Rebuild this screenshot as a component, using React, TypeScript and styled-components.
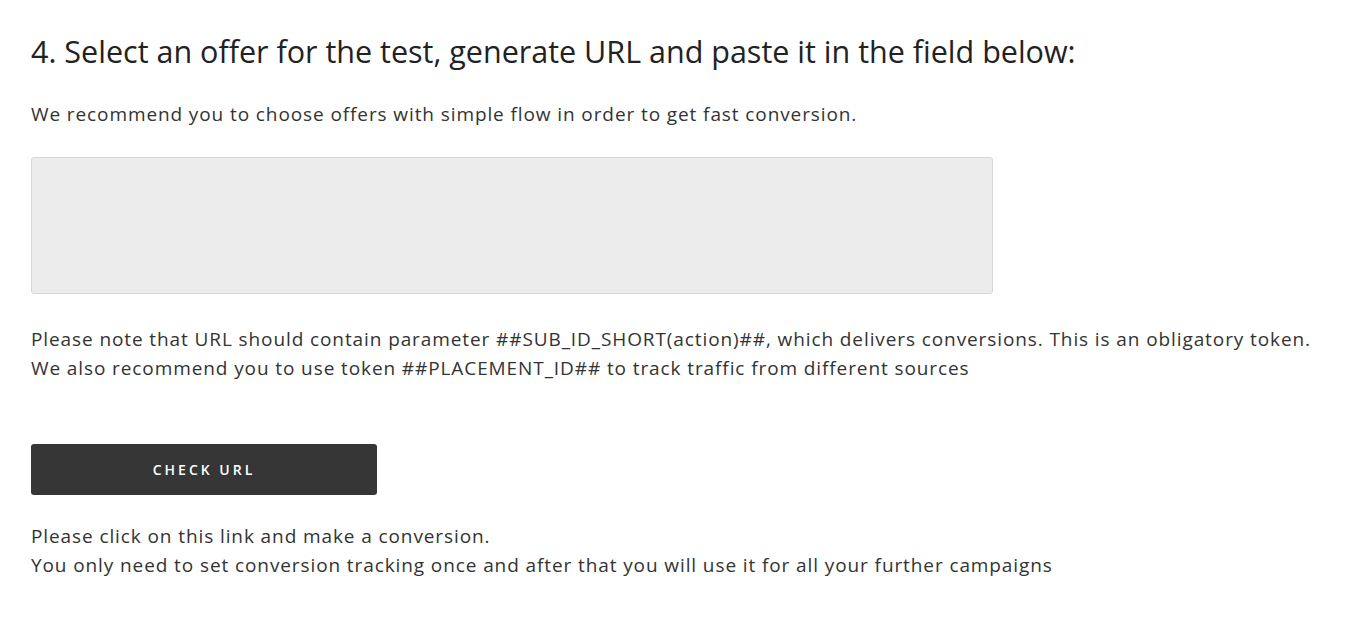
import React from "react";
import styled, { createGlobalStyle } from "styled-components";

const Global = createGlobalStyle`
  html, body { margin: 0; padding: 0; background: #ffffff; }
  body { font-family: "Open Sans", "Liberation Sans", sans-serif; color: #333333; }
`;

const Page = styled.div`
  display: flex;
  flex-direction: column;
  align-items: flex-start;
  padding: 31px 31px 40px 31px;
`;

const Heading = styled.h2`
  margin: 0;
  font-size: 30.5px;
  font-weight: 400;
  line-height: 40px;
  color: #222222;
  white-space: nowrap;
`;

const Text = styled.p`
  margin: 0;
  font-size: 19px;
  line-height: 29px;
  letter-spacing: 0.9px;
  color: #333333;
  white-space: nowrap;
`;

const Lead = styled(Text)`
  margin-top: 29px;
`;

const UrlField = styled.textarea`
  margin-top: 28px;
  width: 962px;
  height: 137px;
  box-sizing: border-box;
  background: #ececec;
  border: 1px solid #d8d8d8;
  border-radius: 3px;
  resize: none;
  outline: none;
  padding: 10px 12px;
  font: inherit;
`;

const Note = styled.div`
  margin-top: 31px;
`;

const CheckButton = styled.button`
  margin-top: 61px;
  width: 346px;
  height: 51px;
  background: #363636;
  color: #ffffff;
  border: none;
  border-radius: 3px;
  font-family: "Open Sans", "Liberation Sans", sans-serif;
  font-size: 14px;
  font-weight: 600;
  letter-spacing: 3px;
  text-transform: uppercase;
  cursor: pointer;
`;

const Footer = styled.div`
  margin-top: 27px;
`;

export default function App() {
  return (
    <>
      <Global />
      <Page>
        <Heading>4. Select an offer for the test, generate URL and paste it in the field below:</Heading>
        <Lead>We recommend you to choose offers with simple flow in order to get fast conversion.</Lead>
        <UrlField />
        <Note>
          <Text>
            Please note that URL should contain parameter ##SUB_ID_SHORT(action)##, which delivers conversions. This is an obligatory token.
          </Text>
          <Text>
            We also recommend you to use token ##PLACEMENT_ID## to track traffic from different sources
          </Text>
        </Note>
        <CheckButton>Check URL</CheckButton>
        <Footer>
          <Text>Please click on this link and make a conversion.</Text>
          <Text>You only need to set conversion tracking once and after that you will use it for all your further campaigns</Text>
        </Footer>
      </Page>
    </>
  );
}
